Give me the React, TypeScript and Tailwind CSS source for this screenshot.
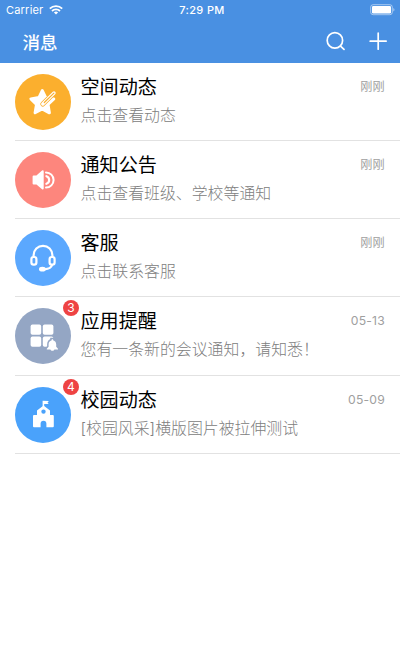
import React from 'react';

interface Message {
  id: number;
  title: string;
  summary: string;
  time: string;
  badge?: number;
  color: string;
  icon: React.ReactNode;
}

const StarIcon = () => (
  <svg className="h-14 w-14" viewBox="0 0 56 56" fill="none" strokeLinecap="round">
    <path
      d="M27.3 16.6L30.7 23.6L38.8 24.9L33 30.5L34.4 38.8L27.2 35L20.1 38.8L21.5 30.5L15.9 24.9L23.9 23.6Z"
      fill="#fff"
      stroke="#fff"
      strokeWidth="3"
      strokeLinejoin="round"
    />
    <path d="M27.8 30L39 19" stroke="#fbaf2e" strokeWidth="5" />
    <path d="M27.8 30L39 19" stroke="#fff" strokeWidth="3.4" />
    <path d="M29.3 28.5L38.9 19.1" stroke="#fbaf2e" strokeWidth="1.2" />
  </svg>
);

const SpeakerIcon = () => (
  <svg className="h-14 w-14" viewBox="0 0 56 56" fill="none" stroke="#fff" strokeLinecap="round">
    <path d="M18.6 24.4H21.8L27.7 19.2V36.6L21.8 31.6H18.6Z" fill="#fff" strokeWidth="2" strokeLinejoin="round" />
    <path d="M31.4 24.2A4 4 0 0 1 31.4 31.8" strokeWidth="2.2" />
    <path d="M31 20.4A7.6 7.6 0 0 1 31 35.6" strokeWidth="2" />
  </svg>
);

const HeadsetIcon = () => (
  <svg className="h-14 w-14" viewBox="0 0 56 56" fill="none" stroke="#fff" strokeWidth="2.2" strokeLinecap="round">
    <path d="M18.6 27V25.2A9.4 9.4 0 0 1 37.4 25.2V27" />
    <rect x="16.4" y="27" width="5" height="7.6" rx="2.2" />
    <rect x="34.6" y="27" width="5" height="7.6" rx="2.2" />
    <path d="M37 35C36.4 37.6 33.6 39 29.5 39.3" />
    <ellipse cx="27.4" cy="39.2" rx="3.4" ry="2.4" fill="#fff" stroke="none" />
  </svg>
);

const AppsIcon = () => (
  <svg className="h-14 w-14" viewBox="0 0 56 56" fill="#fff">
    <rect x="15.6" y="16.6" width="10.6" height="10.2" rx="1.8" />
    <rect x="27.8" y="16.6" width="10.6" height="10.2" rx="1.8" />
    <rect x="15.6" y="28.6" width="10.6" height="10.2" rx="1.8" />
    <rect x="27.8" y="28.6" width="10.6" height="10.2" rx="1.8" />
    <path
      d="M36.7 31.2H38.1V32.2C40.2 32.8 41.2 34.4 41.2 36.6V38.8L43 40.8V41.4H39.4C39 43.2 35.8 43.2 35.4 41.4H31.8V40.8L33.6 38.8V36.6C33.6 34.4 34.6 32.8 36.7 32.2Z"
      stroke="#94a6c4"
      strokeWidth="3"
    />
    <path d="M36.7 31.2H38.1V32.2C40.2 32.8 41.2 34.4 41.2 36.6V38.8L43 40.8V41.4H39.4C39 43.2 35.8 43.2 35.4 41.4H31.8V40.8L33.6 38.8V36.6C33.6 34.4 34.6 32.8 36.7 32.2Z" />
  </svg>
);

const SchoolIcon = () => (
  <svg className="h-14 w-14" viewBox="0 0 56 56" fill="#fff">
    <path d="M27.6 13.8L33.8 14L32.5 15.7L33.8 17H29.2V19.6H27.6Z" />
    <path
      fillRule="evenodd"
      d="M28.5 18.4L35 23.6V28H37.8A1 1 0 0 1 38.8 29V39.3A1 1 0 0 1 37.8 40.3H31.4V36.6A2.9 2.9 0 0 0 25.6 36.6V40.3H19A1 1 0 0 1 18 39.3V29A1 1 0 0 1 19 28H22V23.6ZM28.5 22.4A2.2 2.2 0 1 0 28.5 26.8A2.2 2.2 0 1 0 28.5 22.4Z"
    />
  </svg>
);

const messages: Message[] = [
  { id: 1, title: '空间动态', summary: '点击查看动态', time: '刚刚', color: 'bg-[#fbaf2e]', icon: <StarIcon /> },
  { id: 2, title: '通知公告', summary: '点击查看班级、学校等通知', time: '刚刚', color: 'bg-[#fd867d]', icon: <SpeakerIcon /> },
  { id: 3, title: '客服', summary: '点击联系客服', time: '刚刚', color: 'bg-[#5ba8fe]', icon: <HeadsetIcon /> },
  { id: 4, title: '应用提醒', summary: '您有一条新的会议通知，请知悉！', time: '05-13', badge: 3, color: 'bg-[#94a6c4]', icon: <AppsIcon /> },
  { id: 5, title: '校园动态', summary: '[校园风采]横版图片被拉伸测试', time: '05-09', badge: 4, color: 'bg-[#4aa2fb]', icon: <SchoolIcon /> },
];

function StatusBar() {
  return (
    <div className="grid h-5 grid-cols-3 items-center pr-1 pl-1.5 text-[11px] leading-5">
      <div className="flex items-center gap-1.5">
        <span className="tracking-[0.2px]">Carrier</span>
        <svg className="h-2.5 w-3.5" viewBox="0 0 14 10" fill="none" stroke="#fff" strokeWidth="1.8">
          <path d="M0.8 3.6A8.8 8.8 0 0 1 13.2 3.6" />
          <path d="M3 6A5.8 5.8 0 0 1 11 6" />
          <path d="M7 9.6L4.9 7.5A3 3 0 0 1 9.1 7.5Z" fill="#fff" stroke="none" />
        </svg>
      </div>
      <span className="pl-0.5 text-center font-medium tracking-[0.35px]">7:29 PM</span>
      <svg className="h-3 w-[26px] justify-self-end" viewBox="0 0 26 12" fill="none">
        <rect x="0.7" y="0.7" width="21.6" height="10" rx="2.4" stroke="#fff" strokeOpacity="0.5" />
        <rect x="2" y="2" width="19" height="7.4" rx="1.2" fill="#fff" />
        <path d="M23.4 4V7.4C24.8 6.9 24.8 4.5 23.4 4Z" fill="#fff" fillOpacity="0.6" />
      </svg>
    </div>
  );
}

export default function App() {
  return (
    <div className="h-[660px] w-[400px] overflow-hidden bg-white font-['Inter','Noto_Sans_CJK_SC',sans-serif]">
      <header className="h-[62.5px] bg-[#4990e2] text-white">
        <StatusBar />
        <div className="flex h-[42.5px] items-center justify-between pr-[13px] pl-[22.5px]">
          <h1 className="pt-[3px] text-[17.5px] leading-6 font-medium">消息</h1>
          <div className="flex items-center gap-6">
            <svg className="h-5 w-5" viewBox="0 0 20 20" fill="none" stroke="#fff" strokeWidth="1.7" strokeLinecap="round">
              <circle cx="9.9" cy="9.4" r="7.7" />
              <path d="M15.5 15.2L19 18.4" />
            </svg>
            <svg className="h-[18px] w-[18px]" viewBox="0 0 18 18" stroke="#fff" strokeWidth="1.7" strokeLinecap="round">
              <path d="M9.2 1.2V17.2M1.2 9.2H17.2" />
            </svg>
          </div>
        </div>
      </header>
      <ul>
        {messages.map(m => (
          <li key={m.id} className="ml-[15px] flex h-[78.25px] gap-[9.5px] border-b border-[#e2e2e2] pt-[11px] pr-[15px]">
            <div className={`relative h-14 w-14 shrink-0 rounded-full ${m.color}`}>
              {m.icon}
              {m.badge && (
                <span className="absolute -top-2 -right-2 h-4 w-4 rounded-full bg-[#ee4343] text-center text-[12px] leading-4 text-white">
                  {m.badge}
                </span>
              )}
            </div>
            <div className="min-w-0 flex-1">
              <div className="flex items-center justify-between">
                <h2 className="text-[19.1px] leading-[26px] text-black">{m.title}</h2>
                <span className="text-[12.2px] leading-[26px] tracking-[0.2px] text-[#a0a0a0]">{m.time}</span>
              </div>
              <p className="text-[15.9px] leading-[31px] font-light whitespace-nowrap text-[#808080]">{m.summary}</p>
            </div>
          </li>
        ))}
      </ul>
    </div>
  );
}
